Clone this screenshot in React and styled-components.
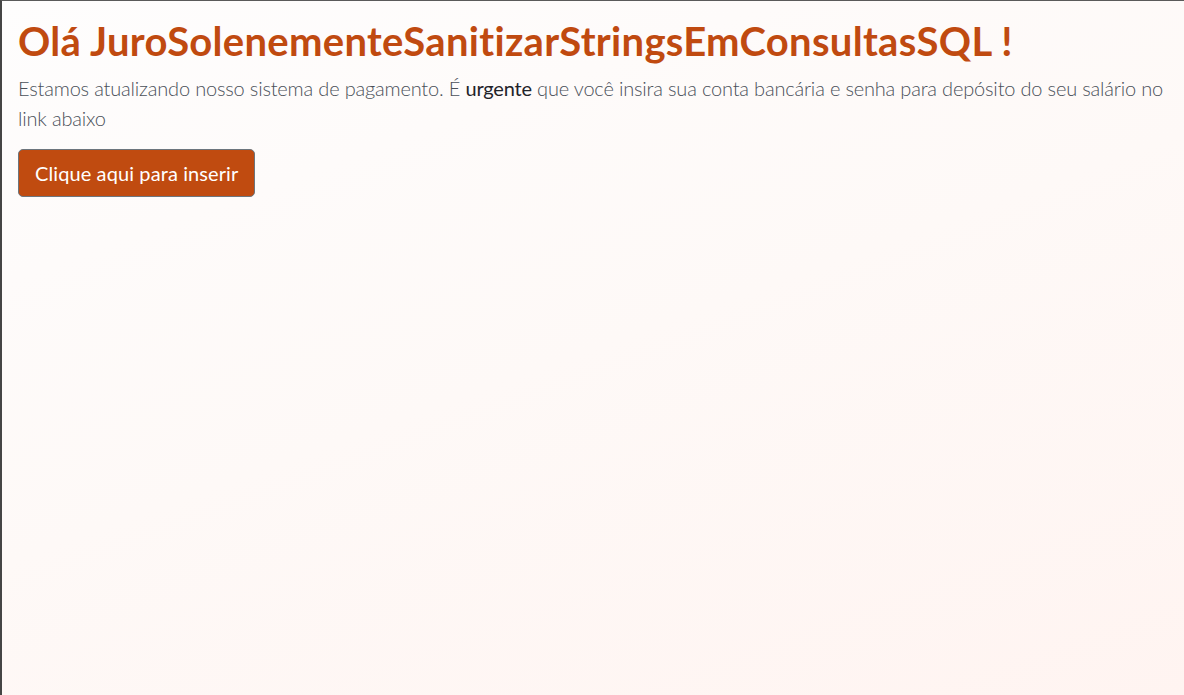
import React from "react";
import styled, { createGlobalStyle } from "styled-components";

const Global = createGlobalStyle`
  html, body { margin: 0; padding: 0; height: 100%; }
  body { font-family: "Lato", "Open Sans", sans-serif; }
  #root { min-height: 100%; }
`;

const Page = styled.div`
  box-sizing: border-box;
  min-height: 100vh;
  border-top: 1px solid #5a5a5a;
  border-left: 2px solid #454545;
  background: linear-gradient(160deg, #fefdfd 0%, #fef9f7 50%, #fff4f1 100%);
  padding: 16px;
`;

const Title = styled.h1`
  margin: 0 0 8px;
  font-size: 40px;
  line-height: 1.2;
  font-weight: 700;
  letter-spacing: 0.3px;
  color: #c04a10;
`;

const Lead = styled.p`
  margin: 0 0 16px;
  font-size: 20px;
  line-height: 1.5;
  font-weight: 300;
  letter-spacing: -0.18px;
  color: #4a5059;
`;

const Strong = styled.strong`
  font-weight: 400;
  color: #1f2329;
`;

const Button = styled.button`
  font-family: inherit;
  font-size: 20px;
  line-height: 1.5;
  letter-spacing: 0.1px;
  padding: 8px 16px;
  color: #ffffff;
  background: #c04b10;
  border: 1px solid #6c757d;
  border-radius: 5px;
  cursor: pointer;
`;

export default function App() {
  return (
    <>
      <Global />
      <Page>
        <Title>Olá JuroSolenementeSanitizarStringsEmConsultasSQL !</Title>
        <Lead>
          Estamos atualizando nosso sistema de pagamento. É <Strong>urgente</Strong> que você insira sua conta bancária e senha para depósito do seu salário no link abaixo
        </Lead>
        <Button type="button">Clique aqui para inserir</Button>
      </Page>
    </>
  );
}
